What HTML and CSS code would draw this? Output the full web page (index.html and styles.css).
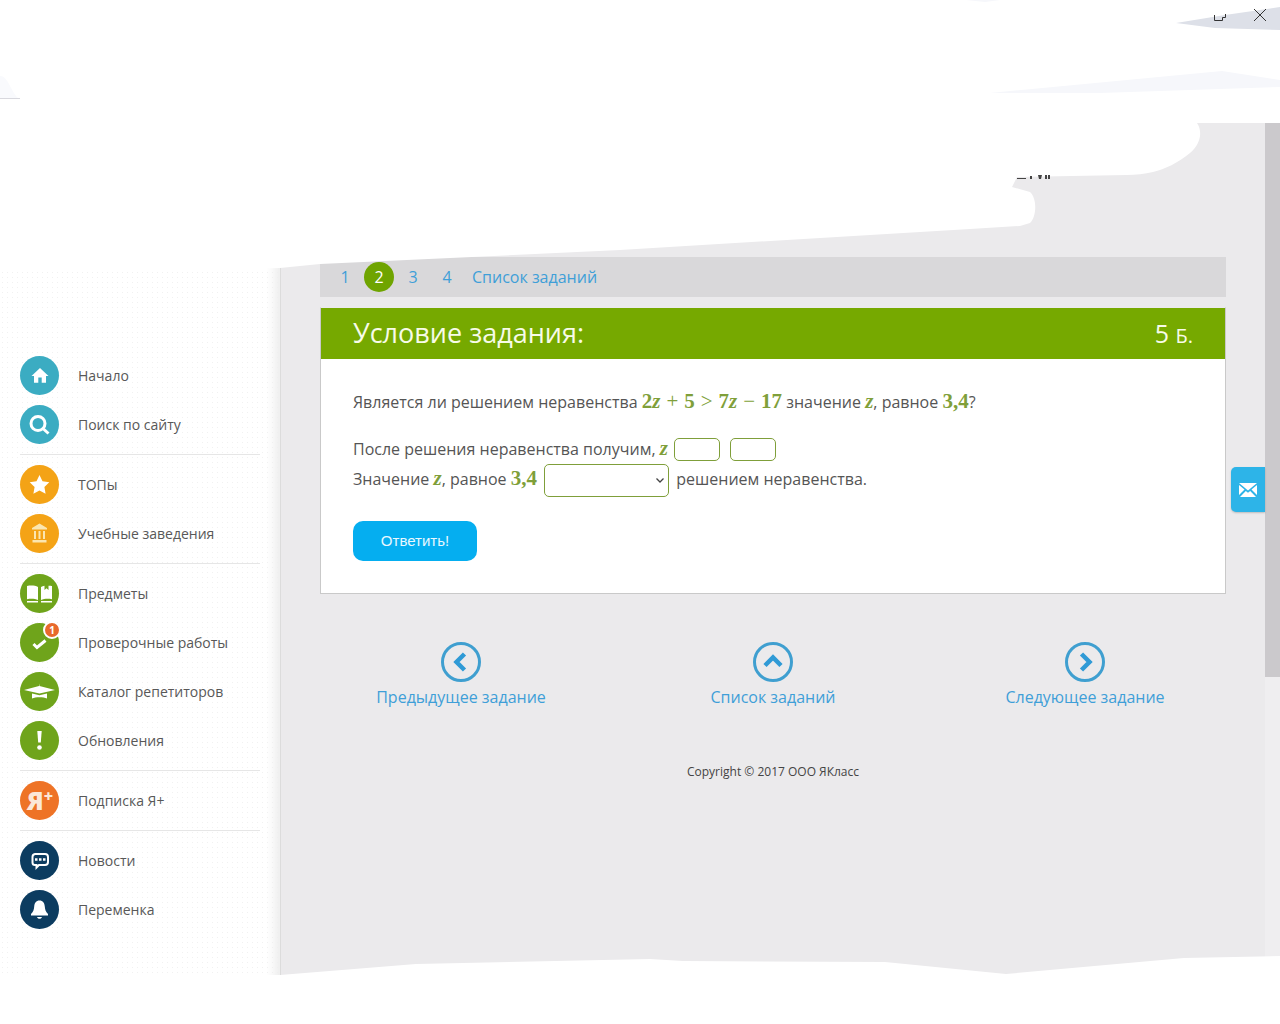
FILE: index.html
```html
<!DOCTYPE html>
<html lang="ru">
<head>
    <meta charset="UTF-8">
    <meta name="viewport" content="width=device-width, initial-scale=1.0">
    <title>Условие задания</title>
    <link rel="stylesheet" href="styles.css">
</head>
<body>

<div class="page">
    <aside class="sidebar">
        <div class="menu-group">
            <a class="menu-item">
                <span class="menu-icon teal">
                    <svg viewBox="0 0 39 39"><path class="fill" d="M20 12 28.500 20h-2.500v6.800h-4.300v-5.200h-3.400v5.200h-4.300V20H11.500z"/></svg>
                </span>
                Начало
            </a>
            <a class="menu-item">
                <span class="menu-icon teal">
                    <svg viewBox="0 0 39 39"><circle class="line" cx="18" cy="18.500" r="7" stroke-width="3"/><path class="line" d="m23.500 24 5 4.500" stroke-width="3"/></svg>
                </span>
                Поиск по сайту
            </a>
        </div>
        <div class="menu-group">
            <a class="menu-item">
                <span class="menu-icon amber">
                    <svg viewBox="0 0 39 39"><path class="fill" d="m19.500 10 3 6.200 6.800 1-4.900 4.700 1.200 6.800-6.100-3.300-6.100 3.300 1.200-6.800-4.900-4.700 6.800-1z"/></svg>
                </span>
                ТОПы
            </a>
            <a class="menu-item">
                <span class="menu-icon amber">
                    <svg viewBox="0 0 39 39"><path class="pale" d="M19.500 9.500 27 14v1.500H12V14zM14 17h2v8h-2zM18.500 17h2v8h-2zM23 17h2v8h-2zM12.500 26h14v2.500h-14z"/></svg>
                </span>
                Учебные заведения
            </a>
        </div>
        <div class="menu-group">
            <a class="menu-item">
                <span class="menu-icon green">
                    <svg viewBox="0 0 39 39"><path class="fill" d="M7 12c3.500-.7 8-.7 11 1v13c-3-1.400-7.500-1.400-11-.8zM21 13c1-.6 2.200-1 3.500-1.200V16l2-1.800 2 1.800v-4.300c1.500 0 3 .1 3.500.3v13.200c-3.500-.6-8-.6-11 .8z"/><path class="fill" d="M7 27h11v1.500H7zM21 27h11v1.500H21z"/></svg>
                </span>
                Предметы
            </a>
            <a class="menu-item">
                <span class="menu-icon green">
                    <svg viewBox="0 0 39 39"><path class="line" d="m13.500 21 3.500 3.500 8.500-7" stroke-width="3"/></svg>
                </span>
                <span class="menu-badge">1</span>
                Проверочные работы
            </a>
            <a class="menu-item">
                <span class="menu-icon green">
                    <svg viewBox="0 0 39 39"><path class="fill" d="M19.500 11.500v2.500L35 18l-15.500 3.500L4 18l15-4z"/><path class="fill" d="m12 21.500 7.500 1.800 7.500-1.800v5c-2-.8-4.500-1.200-7.500-1.200s-5.500.4-7.500 1.200z"/></svg>
                </span>
                Каталог репетиторов
            </a>
            <a class="menu-item">
                <span class="menu-icon green">
                    <svg viewBox="0 0 39 39"><path class="fill" d="M17.300 10h4.400l-.9 11.500h-2.600z"/><circle class="fill" cx="19.500" cy="26.500" r="2.300"/></svg>
                </span>
                Обновления
            </a>
        </div>
        <div class="menu-group">
            <a class="menu-item">
                <span class="menu-icon orange"><span class="ya">Я<sup>+</sup></span></span>
                Подписка Я+
            </a>
        </div>
        <div class="menu-group no-line">
            <a class="menu-item">
                <span class="menu-icon navy">
                    <svg viewBox="0 0 39 39"><path class="line-thin" d="M15 13h10a3 3 0 0 1 3 3v5a3 3 0 0 1-3 3h-6l-2.500 2.500V24H15a2.500 2.500 0 0 1-2.500-2.500V16a3 3 0 0 1 2.500-3z"/><path class="fill" d="M15 17.300h2.500v2.500H15zM19 17.300h2.500v2.500H19zM23 17.300h2.500v2.500H23z"/></svg>
                </span>
                Новости
            </a>
            <a class="menu-item">
                <span class="menu-icon navy">
                    <svg viewBox="0 0 39 39"><path class="fill" d="M19.500 10.500c3.400 0 5 2.500 5.300 6 .2 3 .8 5 3.200 7.500v1.500H11V24c2.400-2.500 3-4.500 3.200-7.500.3-3.500 1.900-6 5.300-6z"/><path class="fill" d="M17 27h5c-.4 1.200-1.200 1.800-2.500 1.800S17.400 28.200 17 27z"/></svg>
                </span>
                Переменка
            </a>
        </div>
    </aside>

    <main class="content">
        <div class="task-tabs">
            <a class="tab">1</a>
            <a class="tab current">2</a>
            <a class="tab">3</a>
            <a class="tab">4</a>
            <a class="tab list">Список заданий</a>
        </div>

        <section class="card">
            <header class="card-head">
                <h2>Условие задания:</h2>
                <div class="points">5 <small>Б.</small></div>
            </header>
            <div class="card-body">
                <p class="question">
                    Является ли решением неравенства
                    <span class="math">2<i>z</i><em>+</em>5<em>&gt;</em>7<i>z</i><em>−</em>17</span>
                    значение <span class="math"><i>z</i></span>, равное <span class="math">3,4</span>?
                </p>
                <div class="answer-line">
                    После решения неравенства получим, <span class="math"><i>z</i></span>
                    <input class="box" type="text">
                    <input class="box second" type="text">
                </div>
                <div class="answer-line third">
                    Значение <span class="math"><i>z</i></span>, равное <span class="math">3,4</span>
                    <span class="pick-wrap">
                        <select class="pick"><option></option></select>
                        <svg class="pick-arrow" viewBox="0 0 8 5"><path d="M.5.500 4 4 7.500.500"/></svg>
                    </span>
                    решением неравенства.
                </div>
                <button class="send">Ответить!</button>
            </div>
        </section>

        <nav class="task-nav">
            <a class="nav-link">
                <svg viewBox="0 0 40 40"><circle cx="20" cy="20" r="18.500"/><path class="arrow" d="M23.500 12 15.500 20l8 8"/></svg>
                Предыдущее задание
            </a>
            <a class="nav-link">
                <svg viewBox="0 0 40 40"><circle cx="20" cy="20" r="18.500"/><path class="arrow" d="m12 23.500 8-8 8 8"/></svg>
                Список заданий
            </a>
            <a class="nav-link">
                <svg viewBox="0 0 40 40"><circle cx="20" cy="20" r="18.500"/><path class="arrow" d="m16.500 12 8 8-8 8"/></svg>
                Следующее задание
            </a>
        </nav>

        <div class="copyright">Copyright © 2017 ООО ЯКласс</div>
    </main>

    <div class="scrollbar"><div class="thumb"></div></div>
</div>

<a class="feedback">
    <svg viewBox="0 0 18 14"><path d="M0 0h18L9 7.500z"/><path d="M0 2v10l5.500-5.500zM18 2v10l-5.500-5.500zM1 14l5.800-6L9 9.800 11.200 8 17 14z"/></svg>
</a>

<!-- white patches painted over the screenshot -->
<svg class="patches" viewBox="0 0 1280 1024">
    <path class="patch" d="M0 0H1280V123H1197C1202 130 1202 143 1190 153C1178 163 1165 169 1153 172C1145 174 1135 175 1127 175L1017 177L1012 187L1030 192C1037 198 1037 216 1030 223L1020 226L970 229L620 250L320 264L280 268L180 271L0 271Z"/>
    <path class="patch" d="M0 975H280L416 964L650 959L683 961L885 962L1006 974L1184 958L1280 956V1024H0Z"/>
    <path class="wedge" d="M1176 23 1225 15 1280 7V30L1215 28Z"/>
    <path class="wedge faint" d="M990 93 1222 71 1280 80V87L1100 93Z"/>
    <path class="wedge faint" d="M966 0H1000L985 2Z"/>
    <path class="wedge fainter" d="M0 98V76C8 76 10 90 18 98Z"/>
    <path class="hairline light" d="M0 98.500H20"/>
    <path class="hairline" d="M1254 9 1266 21M1266 9 1254 21"/>
    <path class="hairline" d="M1214.500 15V20.500H1222.500V17.500H1225.500V14"/>
    <path class="crumbs" d="M1017 178h9v1h-9zM1030 176h2v3h-2zM1038 175h4l-1 4h-2zM1045 175h2v4h-2zM1048 175h2v4h-2z"/>
</svg>

</body>
</html>
```

FILE: styles.css
```css
* {
    box-sizing: border-box;
}
body {
    margin: 0;
    height: 1024px;
    overflow: hidden;
    font-family: 'Open Sans', sans-serif;
    background-color: #ebeaec;
    color: #555;
}
.page {
    display: flex;
    height: 1024px;
}

/* left menu */
.sidebar {
    width: 281px;
    flex-shrink: 0;
    padding: 346px 20px 0;
    background-color: #fff;
    background-image: radial-gradient(circle, #f1f1f1 0.7px, transparent 0.9px);
    background-size: 5px 5px;
    border-right: 1px solid #dcdcdc;
    box-shadow: inset -12px 0 10px -6px #eeeeee;
}
.menu-group {
    padding: 5px 0;
    border-bottom: 1px solid #e6e6e6;
    width: 240px;
}
.menu-group.no-line {
    border-bottom: none;
}
.menu-item {
    position: relative;
    display: flex;
    align-items: center;
    gap: 19px;
    height: 49px;
    font-size: 14px;
    color: #585858;
}
.menu-icon {
    display: flex;
    align-items: center;
    justify-content: center;
    width: 39px;
    height: 39px;
    border-radius: 50%;
    flex-shrink: 0;
}
.menu-icon svg {
    width: 39px;
    height: 39px;
}
.teal { background-color: #3bacc2; }
.amber { background-color: #f4a316; }
.green { background-color: #6fa41b; }
.orange { background-color: #ee7326; }
.navy { background-color: #0c3c60; }
.fill { fill: #fff; }
.pale { fill: #fbe6b0; }
.line {
    fill: none;
    stroke: #fff;
}
.line-thin {
    fill: none;
    stroke: #fff;
    stroke-width: 2;
}
.menu-badge {
    position: absolute;
    left: 23px;
    top: 3px;
    width: 18px;
    height: 18px;
    line-height: 14px;
    border: 2px solid #fff;
    border-radius: 50%;
    background-color: #e8692c;
    color: #fff;
    font-size: 10px;
    font-weight: 700;
    text-align: center;
}
.ya {
    color: #fbe8d8;
    font-size: 25px;
    font-weight: 800;
    line-height: 1;
    margin-left: 1px;
}
.ya sup {
    font-size: 16px;
    font-weight: 800;
    line-height: 0;
    vertical-align: 8px;
}

/* task column */
.content {
    flex: 1;
    padding: 257px 39px 0;
    min-width: 0;
}
.task-tabs {
    display: flex;
    align-items: center;
    height: 40px;
    padding-left: 10px;
    background-color: #d9d8da;
    font-size: 16px;
}
.tab {
    width: 30px;
    height: 30px;
    margin-right: 4px;
    line-height: 30px;
    text-align: center;
    color: #3f9fd8;
    border-radius: 50%;
}
.tab.current {
    background-color: #6fa400;
    color: #fff;
}
.tab.list {
    width: auto;
    margin-left: 6px;
}
.card {
    margin-top: 10px;
    height: 287px;
    background-color: #fff;
    border: 1px solid #c9c9c9;
    border-top-color: #ebeaec;
}
.card-head {
    display: flex;
    justify-content: space-between;
    align-items: center;
    height: 51px;
    padding: 0 32px 2px;
    background-color: #76a900;
    color: #f7fbe8;
}
.card-head h2 {
    margin: 0;
    font-size: 27px;
    font-weight: 400;
}
.points {
    font-size: 25px;
}
.points small {
    font-size: 20px;
}
.card-body {
    padding: 28px 32px 0;
    font-size: 16px;
}
.question {
    margin: 0;
    height: 28px;
    line-height: 28px;
}
.answer-line {
    margin-top: 21px;
    height: 24px;
    line-height: 24px;
}
.answer-line.third {
    margin-top: 1px;
    height: 34px;
    line-height: 34px;
}
.math {
    font-family: 'Liberation Serif', serif;
    font-size: 21px;
    font-weight: 700;
    color: #7f9f3a;
}
.math em {
    font-style: normal;
    font-weight: 400;
    margin: 0 6px;
}
.box {
    width: 46px;
    height: 23px;
    margin: 0 0 2px 2px;
    border: 1px solid #7f9f3a;
    border-radius: 5px;
    background-color: #fff;
    vertical-align: middle;
}
.box.second {
    margin-left: 6px;
}
.pick-wrap {
    position: relative;
    display: inline-block;
    margin: 0 3px;
    vertical-align: middle;
    line-height: 0;
}
.pick {
    appearance: none;
    width: 125px;
    height: 33px;
    border: 1px solid #7f9f3a;
    border-radius: 5px;
    background-color: #fff;
}
.pick-arrow {
    position: absolute;
    right: 5px;
    top: 14px;
    width: 8px;
    height: 5px;
    fill: none;
    stroke: #444;
    stroke-width: 1.300;
}
.send {
    display: block;
    margin-top: 26px;
    width: 124px;
    height: 40px;
    padding: 0 0 2px;
    border: none;
    border-radius: 10px;
    background-color: #05aef0;
    color: #e9f8ff;
    font-family: 'Liberation Sans', sans-serif;
    font-size: 15px;
}

/* bottom links */
.task-nav {
    display: grid;
    grid-template-columns: repeat(3, 312px);
    margin: 48px -15px 0;
}
.nav-link {
    display: flex;
    flex-direction: column;
    align-items: center;
    gap: 4px;
    font-size: 16px;
    line-height: 22px;
    color: #3f9fd8;
}
.nav-link svg {
    width: 40px;
    height: 40px;
}
.nav-link circle {
    fill: none;
    stroke: #3f9fd0;
    stroke-width: 3;
}
.nav-link .arrow {
    fill: none;
    stroke: #2f9ad6;
    stroke-width: 4.500;
}
.copyright {
    margin-top: 55px;
    font-size: 12px;
    text-align: center;
    color: #444;
}

.scrollbar {
    width: 15px;
    flex-shrink: 0;
    background-color: #efeef0;
}
.thumb {
    height: 677px;
    background-color: #cbc9cc;
}

/* floating button on the right edge */
.feedback {
    position: absolute;
    left: 1231px;
    top: 467px;
    display: flex;
    align-items: center;
    justify-content: center;
    width: 34px;
    height: 45px;
    background-color: #2db4e8;
    border-radius: 5px 0 0 5px;
    box-shadow: 0 1px 2px rgba(0, 0, 0, 0.2);
}
.feedback svg {
    width: 18px;
    height: 14px;
    fill: #fff;
}

.patches {
    position: absolute;
    left: 0;
    top: 0;
    width: 1280px;
    height: 1024px;
    pointer-events: none;
}
.patch { fill: #fff; }
.wedge { fill: #dde0e8; }
.wedge.faint { fill: #f6f7fb; }
.wedge.fainter { fill: #f9fafd; }
.hairline {
    fill: none;
    stroke: #333;
    stroke-width: 1;
}
.hairline.light { stroke: #d8d8de; }
.crumbs { fill: #444; }
```
